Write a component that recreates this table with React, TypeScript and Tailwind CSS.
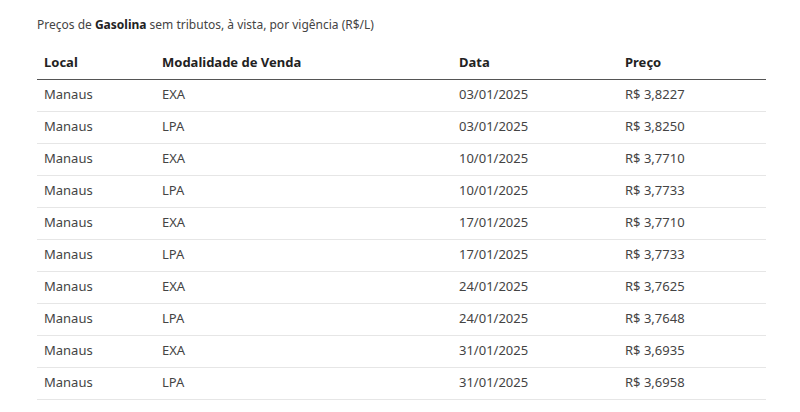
const rows = [
  { local: "Manaus", mod: "EXA", data: "03/01/2025", preco: "R$ 3,8227" },
  { local: "Manaus", mod: "LPA", data: "03/01/2025", preco: "R$ 3,8250" },
  { local: "Manaus", mod: "EXA", data: "10/01/2025", preco: "R$ 3,7710" },
  { local: "Manaus", mod: "LPA", data: "10/01/2025", preco: "R$ 3,7733" },
  { local: "Manaus", mod: "EXA", data: "17/01/2025", preco: "R$ 3,7710" },
  { local: "Manaus", mod: "LPA", data: "17/01/2025", preco: "R$ 3,7733" },
  { local: "Manaus", mod: "EXA", data: "24/01/2025", preco: "R$ 3,7625" },
  { local: "Manaus", mod: "LPA", data: "24/01/2025", preco: "R$ 3,7648" },
  { local: "Manaus", mod: "EXA", data: "31/01/2025", preco: "R$ 3,6935" },
  { local: "Manaus", mod: "LPA", data: "31/01/2025", preco: "R$ 3,6958" },
];

export default function App() {
  return (
    <main className="bg-white w-[800px] h-[412px] overflow-hidden pl-[37px] pt-[16px] font-['Noto_Sans',sans-serif] text-[13px]">
      {/* caption */}
      <p className="text-[#444] text-[12px] leading-[18px] h-[31px]">
        Preços de <span className="font-bold text-[#222]">Gasolina</span> sem tributos, à vista, por vigência (R$/L)
      </p>

      {/* table */}
      <table className="w-[729px] table-fixed border-collapse">
        <colgroup>
          <col className="w-[118px]" />
          <col className="w-[297px]" />
          <col className="w-[166px]" />
          <col className="w-[148px]" />
        </colgroup>
        <thead>
          <tr className="h-[32px] border-b border-[#555] text-left text-[#222]">
            <th className="pl-[7px] font-bold">Local</th>
            <th className="pl-[7px] font-bold">Modalidade de Venda</th>
            <th className="pl-[7px] font-bold">Data</th>
            <th className="pl-[7px] font-bold">Preço</th>
          </tr>
        </thead>
        <tbody className="text-[#444]">
          {rows.map((r, i) => (
            <tr key={i} className="h-[32px] border-b border-[#e6e6e6]">
              <td className="pl-[7px]">{r.local}</td>
              <td className="pl-[7px]">{r.mod}</td>
              <td className="pl-[7px]">{r.data}</td>
              <td className="pl-[7px]">{r.preco}</td>
            </tr>
          ))}
        </tbody>
      </table>
    </main>
  );
}
